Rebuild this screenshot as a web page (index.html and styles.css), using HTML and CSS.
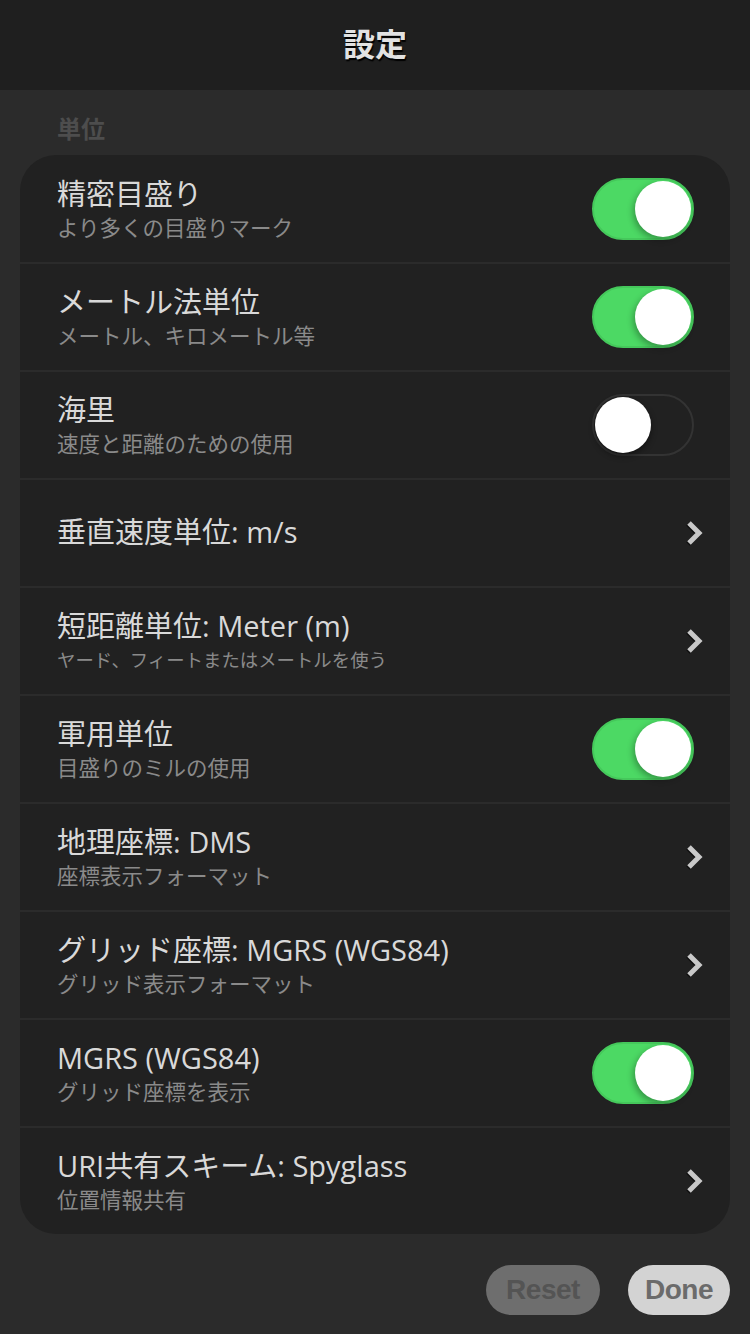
FILE: index.html
```html
<!DOCTYPE html>
<html lang="ja">
<head>
  <meta charset="UTF-8" />
  <meta name="viewport" content="width=device-width, initial-scale=1.0"/>
  <title>設定</title>
  <link rel="stylesheet" href="styles.css">
</head>
<body>
  <header class="topbar">
    <h1>設定</h1>
  </header>

  <main class="content">
    <h2 class="section-title">単位</h2>

    <div class="card">
      <div class="row">
        <div class="text">
          <div class="title">精密目盛り</div>
          <div class="sub">より多くの目盛りマーク</div>
        </div>
        <div class="switch on"><span class="knob"></span></div>
      </div>

      <div class="row">
        <div class="text">
          <div class="title">メートル法単位</div>
          <div class="sub">メートル、キロメートル等</div>
        </div>
        <div class="switch on"><span class="knob"></span></div>
      </div>

      <div class="row">
        <div class="text">
          <div class="title">海里</div>
          <div class="sub">速度と距離のための使用</div>
        </div>
        <div class="switch"><span class="knob"></span></div>
      </div>

      <div class="row">
        <div class="text">
          <div class="title">垂直速度単位: m/s</div>
        </div>
        <svg class="chevron" viewBox="0 0 18 26"><polyline points="3,3 13,13 3,23"/></svg>
      </div>

      <div class="row">
        <div class="text">
          <div class="title">短距離単位: Meter (m)</div>
          <!-- long subtitle is shrunk to fit, as in the app -->
          <div class="sub small">ヤード、フィートまたはメートルを使う</div>
        </div>
        <svg class="chevron" viewBox="0 0 18 26"><polyline points="3,3 13,13 3,23"/></svg>
      </div>

      <div class="row">
        <div class="text">
          <div class="title">軍用単位</div>
          <div class="sub">目盛りのミルの使用</div>
        </div>
        <div class="switch on"><span class="knob"></span></div>
      </div>

      <div class="row">
        <div class="text">
          <div class="title">地理座標: DMS</div>
          <div class="sub">座標表示フォーマット</div>
        </div>
        <svg class="chevron" viewBox="0 0 18 26"><polyline points="3,3 13,13 3,23"/></svg>
      </div>

      <div class="row">
        <div class="text">
          <div class="title">グリッド座標: MGRS (WGS84)</div>
          <div class="sub">グリッド表示フォーマット</div>
        </div>
        <svg class="chevron" viewBox="0 0 18 26"><polyline points="3,3 13,13 3,23"/></svg>
      </div>

      <div class="row">
        <div class="text">
          <div class="title">MGRS (WGS84)</div>
          <div class="sub">グリッド座標を表示</div>
        </div>
        <div class="switch on"><span class="knob"></span></div>
      </div>

      <div class="row">
        <div class="text">
          <div class="title">URI共有スキーム: Spyglass</div>
          <div class="sub">位置情報共有</div>
        </div>
        <svg class="chevron" viewBox="0 0 18 26"><polyline points="3,3 13,13 3,23"/></svg>
      </div>
    </div>

    <div class="actions">
      <button class="btn reset">Reset</button>
      <button class="btn done">Done</button>
    </div>
  </main>
</body>
</html>
```

FILE: styles.css
```css
:root {
  --page-bg: #2b2b2b;
  --bar-bg: #1f1f1f;
  --card-bg: #212121;
  --divider: #2b2b2b;
  --text-main: #d9d9d9;
  --text-sub: #8a8a8a;
  --green: #4cd964;
}

* {
  margin: 0;
  padding: 0;
  box-sizing: border-box;
}

body {
  font-family: "Open Sans", "Noto Sans CJK JP", sans-serif;
  background-color: var(--page-bg);
  color: var(--text-main);
  width: 750px;
  height: 1334px;
  overflow: hidden;
}

.topbar {
  height: 90px;
  background-color: var(--bar-bg);
  display: flex;
  align-items: center;
  justify-content: center;
}

.topbar h1 {
  font-family: "Noto Sans CJK JP", sans-serif;
  font-size: 32px;
  font-weight: 700;
  color: #e2e2e2;
  text-shadow: 1px 2px 1px #000;
  line-height: 1;
  margin-top: -6px;
}

.content {
  padding: 0 20px;
}

.section-title {
  font-family: "Noto Sans CJK JP", sans-serif;
  font-size: 24px;
  font-weight: 700;
  color: #4d4d4d;
  padding: 22px 0 0 37px;
  height: 65px;
  line-height: 1.3;
}

.card {
  background-color: var(--card-bg);
  border-radius: 36px;
  overflow: hidden;
}

.row {
  height: 108px;
  display: flex;
  align-items: center;
  padding: 0 26px 0 37px;
  border-top: 2px solid var(--divider);
}

.row:first-child {
  height: 107px;
  border-top: none;
}

.text {
  flex: 1;
  padding-bottom: 2px;
}

.title {
  font-size: 29px;
  line-height: 40px;
  color: var(--text-main);
}

.sub {
  font-size: 21.5px;
  line-height: 28px;
  color: var(--text-sub);
}

.sub.small {
  font-size: 18.4px;
}

.switch {
  position: relative;
  width: 102px;
  height: 62px;
  border-radius: 31px;
  border: 2px solid #333333;
  background-color: transparent;
  margin-right: 10px;
}

.switch.on {
  background-color: var(--green);
  border-color: #45c85b;
}

.knob {
  position: absolute;
  top: 1px;
  left: 1px;
  width: 56px;
  height: 56px;
  border-radius: 50%;
  background: #ffffff;
  box-shadow: 0 3px 6px rgba(0, 0, 0, 0.45);
}

.switch.on .knob {
  left: 41px;
  box-shadow: -2px 3px 6px rgba(0, 0, 0, 0.3);
}

.chevron {
  width: 18px;
  height: 26px;
  overflow: visible;
  filter: drop-shadow(-1px 1px 0 #0e0e0e);
}

.chevron polyline {
  fill: none;
  stroke: #c9c9c9;
  stroke-width: 5;
  stroke-linejoin: miter;
}

.actions {
  display: flex;
  justify-content: flex-end;
  gap: 28px;
  margin-top: 31px;
}

.btn {
  height: 50px;
  border: none;
  border-radius: 25px;
  font-family: "Liberation Sans", Arial, sans-serif;
  font-weight: 700;
  font-size: 28px;
  letter-spacing: -0.5px;
}

.btn.reset {
  width: 114px;
  background-color: #6e6e6e;
  color: #545454;
}

.btn.done {
  width: 102px;
  background-color: #d3d3d3;
  color: #6b6b6b;
}
```
